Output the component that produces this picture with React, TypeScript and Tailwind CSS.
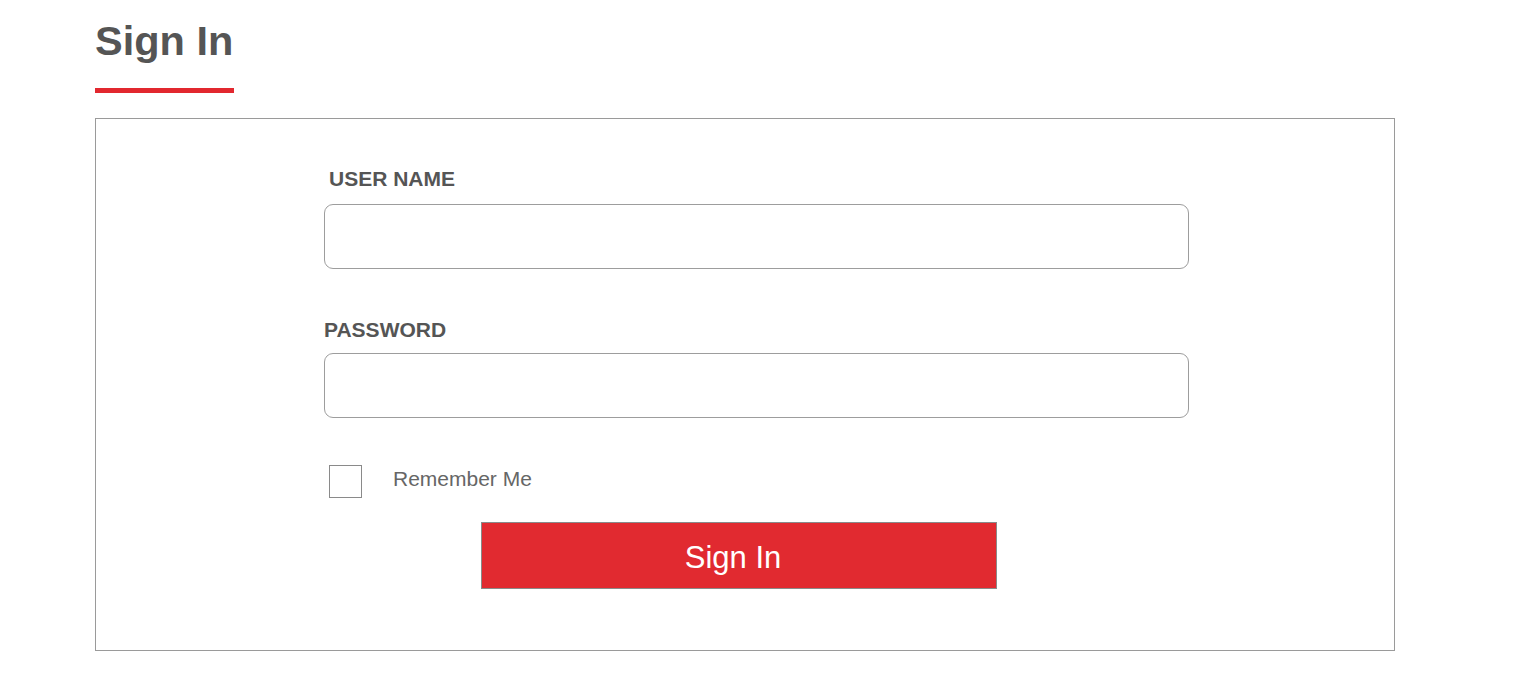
export default function App() {
  return (
    <div className="min-h-[700px] bg-white pl-[95px] pt-[17px] font-['Liberation_Sans',Arial,sans-serif]">
      <h1 className="text-[41.5px] font-bold leading-[48px] text-[#555555]">Sign In</h1>
      <div className="mt-[23px] h-[5px] w-[139px] bg-[#e2282f]" />
      <div className="mt-[25px] w-[1300px] border border-[#9a9a9a] pb-[61px] pl-[228px] pt-[48px]">
        <label className="ml-[5px] block text-[21px] font-bold leading-[24px] text-[#555555]">USER NAME</label>
        <input
          type="text"
          className="mt-[13px] block h-[65px] w-[865px] rounded-[9px] border border-[#9d9d9d] bg-white px-4 text-lg outline-none"
        />
        <label className="mt-[49px] block text-[21px] font-bold leading-[24px] text-[#555555]">PASSWORD</label>
        <input
          type="password"
          className="mt-[11px] block h-[65px] w-[865px] rounded-[9px] border border-[#9d9d9d] bg-white px-4 text-lg outline-none"
        />
        <div className="ml-[5px] mt-[47px] flex items-center">
          <span className="block h-[33px] w-[33px] border border-[#8a8a8a] bg-white" />
          <span className="mb-[6px] ml-[31px] text-[21px] leading-[24px] text-[#666666]">Remember Me</span>
        </div>
        <button className="ml-[157px] mt-[24px] flex h-[67px] w-[516px] items-center justify-center border border-[#8a8a8a] bg-[#e12a30] pr-[12px] pt-[3px] text-[31px] leading-none text-white">
          Sign In
        </button>
      </div>
    </div>
  );
}
